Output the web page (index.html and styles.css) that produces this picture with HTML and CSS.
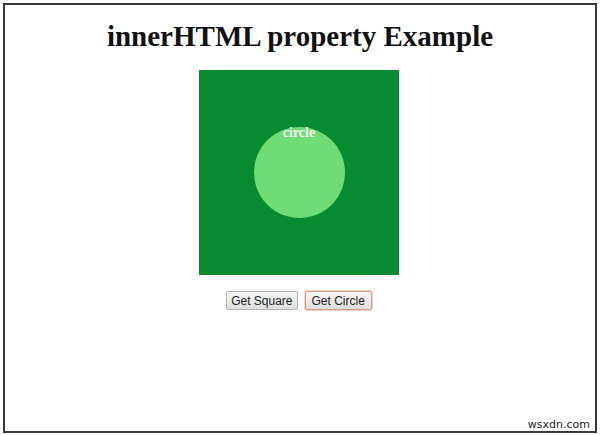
FILE: index.html
```html
<!DOCTYPE html>
<html>
<head>
<meta charset="utf-8">
<link rel="stylesheet" href="styles.css">
</head>
<body>
<div class="frame">
  <h1 class="title">innerHTML property Example</h1>
  <div class="square">
    <div class="circle"><span class="label">circle</span></div>
  </div>
  <div class="buttons">
    <button class="btn">Get Square</button>
    <button class="btn btn-active">Get Circle</button>
  </div>
  <div class="watermark">wsxdn.com</div>
</div>
</body>
</html>
```
FILE: styles.css
```css
html, body {
  margin: 0;
  padding: 0;
  background: #ffffff;
}
.frame {
  position: relative;
  box-sizing: border-box;
  width: 594px;
  height: 430px;
  margin: 3px 0 0 3px;
  border: 2px solid #3a3a3a;
  display: flex;
  flex-direction: column;
  align-items: center;
}
.title {
  margin: 14px 0 0 0;
  font-family: "Liberation Serif", serif;
  font-weight: bold;
  font-size: 29px;
  line-height: 34px;
  color: #111;
}
.square {
  margin-top: 17px;
  margin-left: -2px;
  width: 200px;
  height: 205px;
  background: #078a30;
  display: flex;
  align-items: center;
  justify-content: center;
}
.circle {
  width: 91px;
  height: 91px;
  border-radius: 50%;
  background: #70dc78;
  display: flex;
  justify-content: center;
  align-items: flex-start;
}
.label {
  font-family: "Liberation Serif", serif;
  font-weight: bold;
  font-size: 14px;
  line-height: 14px;
  margin-top: -1px;
  color: #eef8ee;
}
.buttons {
  margin-top: 16px;
  margin-left: -2px;
  display: flex;
  gap: 7px;
}
.btn {
  font-family: "Liberation Sans", Arial, sans-serif;
  font-size: 12px;
  height: 19px;
  padding: 0 4px;
  border: 1px solid #b4b4b4;
  border-radius: 2px;
  background: linear-gradient(#f6f6f6, #dedede);
  color: #222;
}
.btn-active {
  padding: 0 6px;
  border-color: #d79a86;
  box-shadow: 0 0 0 1px #f0d2c6;
}
.watermark {
  position: absolute;
  right: 5px;
  bottom: 0px;
  font-family: "DejaVu Sans", sans-serif;
  font-size: 11px;
  color: #222;
}
```
